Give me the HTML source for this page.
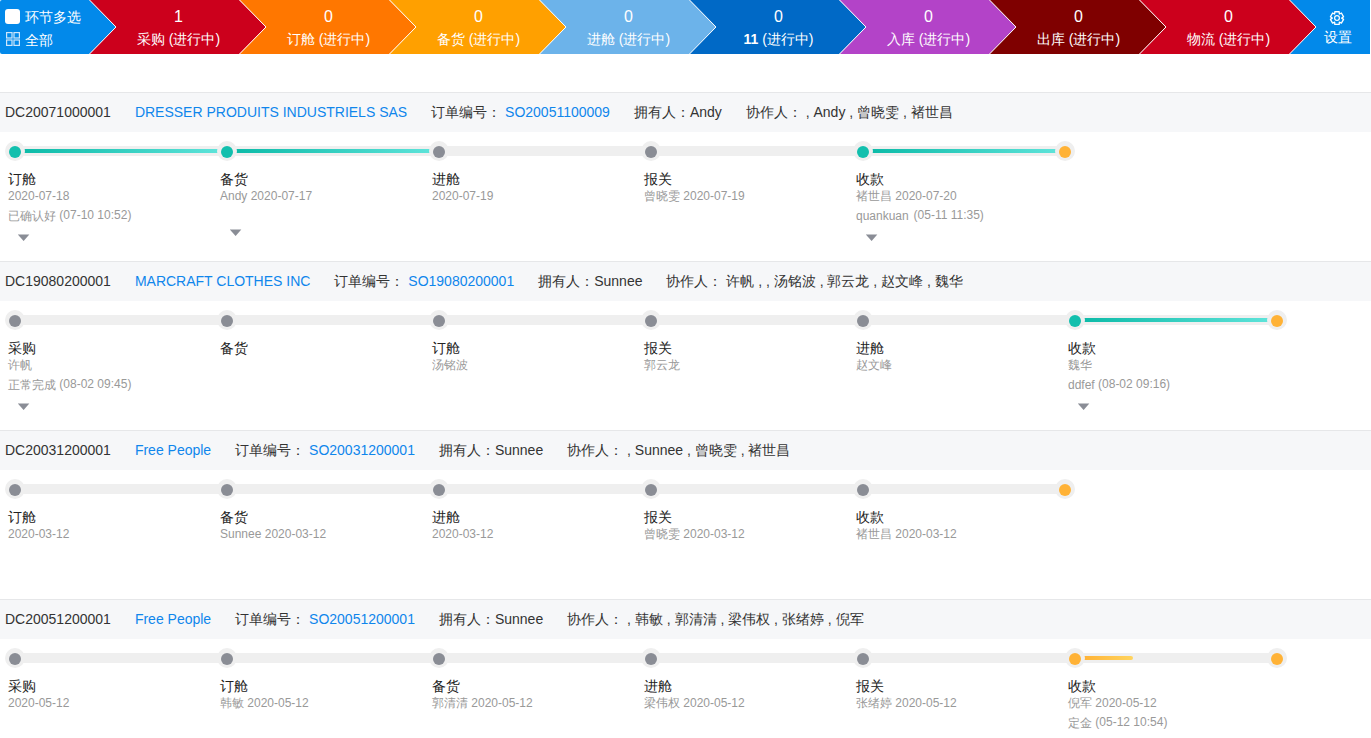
<!DOCTYPE html>
<html><head><meta charset="utf-8"><style>
*{box-sizing:border-box;margin:0;padding:0}
html,body{width:1371px;height:738px;overflow:hidden;background:#fff;font-family:"Liberation Sans",sans-serif;}
.abs{position:absolute}
.hdr{position:absolute;left:0;top:0;width:1371px;height:54px}
.seg-t{position:absolute;color:#fff;text-align:center;white-space:nowrap}
.num{font-size:16px;line-height:16px;top:9px}
.lbl{font-size:14px;line-height:14px;top:32px}
.rh{position:absolute;left:0;width:1371px;height:40px;background:#f6f7f9;border-top:1px solid #e6e7e9}
.rhf{position:absolute;left:5px;top:11px;font-size:14px;line-height:16px;color:#333;white-space:nowrap}
.rhf span{margin-right:24px}
.rhf i{font-style:normal}
.lk{color:#0f86ec}
.track{position:absolute;height:10px;background:#efefef;border-radius:5px}
.bar{position:absolute;height:4px;border-radius:2px}
.ring{position:absolute;width:20px;height:20px;border-radius:50%;background:#efefef}
.dot{position:absolute;width:12px;height:12px;border-radius:50%}
.t1{position:absolute;font-size:14px;line-height:16px;color:#222;white-space:nowrap}
.t2{position:absolute;font-size:12px;line-height:14px;color:#999;white-space:nowrap}
.caret{position:absolute}
</style></head><body>

<svg class="hdr" width="1371" height="54" viewBox="0 0 1371 54"><path d="M2,0 H89.5 L116,27 L89.5,54 H2 Q0,54 0,52 V2 Q0,0 2,0 Z" fill="#0289ea"/><path d="M1289.5,0 H1370 V54 H1289.5 L1316,27 Z" fill="#0289ea"/><path d="M89.5,0 H239.5 L266.0,27 L239.5,54 H89.5 L116.0,27 Z" fill="#cc001c"/><path d="M239.5,0 H389.5 L416.0,27 L389.5,54 H239.5 L266.0,27 Z" fill="#ff7700"/><path d="M389.5,0 H539.5 L566.0,27 L539.5,54 H389.5 L416.0,27 Z" fill="#ffa000"/><path d="M539.5,0 H689.5 L716.0,27 L689.5,54 H539.5 L566.0,27 Z" fill="#6cb3ea"/><path d="M689.5,0 H839.5 L866.0,27 L839.5,54 H689.5 L716.0,27 Z" fill="#0069c6"/><path d="M839.5,0 H989.5 L1016.0,27 L989.5,54 H839.5 L866.0,27 Z" fill="#b343c8"/><path d="M989.5,0 H1139.5 L1166.0,27 L1139.5,54 H989.5 L1016.0,27 Z" fill="#7f0000"/><path d="M1139.5,0 H1289.5 L1316.0,27 L1289.5,54 H1139.5 L1166.0,27 Z" fill="#cc001c"/><path d="M89.5,0 L116.0,27 L89.5,54" fill="none" stroke="#fff" stroke-width="1"/><path d="M239.5,0 L266.0,27 L239.5,54" fill="none" stroke="#fff" stroke-width="1"/><path d="M389.5,0 L416.0,27 L389.5,54" fill="none" stroke="#fff" stroke-width="1"/><path d="M539.5,0 L566.0,27 L539.5,54" fill="none" stroke="#fff" stroke-width="1"/><path d="M689.5,0 L716.0,27 L689.5,54" fill="none" stroke="#fff" stroke-width="1"/><path d="M839.5,0 L866.0,27 L839.5,54" fill="none" stroke="#fff" stroke-width="1"/><path d="M989.5,0 L1016.0,27 L989.5,54" fill="none" stroke="#fff" stroke-width="1"/><path d="M1139.5,0 L1166.0,27 L1139.5,54" fill="none" stroke="#fff" stroke-width="1"/><path d="M1289.5,0 L1316.0,27 L1289.5,54" fill="none" stroke="#fff" stroke-width="1"/></svg>
<div class="abs" style="left:5px;top:9px;width:15px;height:15px;background:#fff;border-radius:3px"></div>
<div class="abs" style="left:25px;top:9px;font-size:14px;line-height:16px;color:#fff">环节多选</div>
<svg class="abs" style="left:6px;top:32px" width="14" height="14" viewBox="0 0 14 14"><g fill="none" stroke="#cfe6fb" stroke-width="1.2"><rect x="0.6" y="0.6" width="5.4" height="5.4"/><rect x="8" y="0.6" width="5.4" height="5.4"/><rect x="0.6" y="8" width="5.4" height="5.4"/><rect x="8" y="8" width="5.4" height="5.4"/></g></svg>
<div class="abs" style="left:25px;top:32px;font-size:14px;line-height:16px;color:#fff">全部</div>
<div class="seg-t num" style="left:118.5px;width:120px">1</div>
<div class="seg-t lbl" style="left:108.5px;width:140px">采购 (进行中)</div>
<div class="seg-t num" style="left:268.5px;width:120px">0</div>
<div class="seg-t lbl" style="left:258.5px;width:140px">订舱 (进行中)</div>
<div class="seg-t num" style="left:418.5px;width:120px">0</div>
<div class="seg-t lbl" style="left:408.5px;width:140px">备货 (进行中)</div>
<div class="seg-t num" style="left:568.5px;width:120px">0</div>
<div class="seg-t lbl" style="left:558.5px;width:140px">进舱 (进行中)</div>
<div class="seg-t num" style="left:718.5px;width:120px">0</div>
<div class="seg-t lbl" style="left:708.5px;width:140px"><b>11</b> (进行中)</div>
<div class="seg-t num" style="left:868.5px;width:120px">0</div>
<div class="seg-t lbl" style="left:858.5px;width:140px">入库 (进行中)</div>
<div class="seg-t num" style="left:1018.5px;width:120px">0</div>
<div class="seg-t lbl" style="left:1008.5px;width:140px">出库 (进行中)</div>
<div class="seg-t num" style="left:1168.5px;width:120px">0</div>
<div class="seg-t lbl" style="left:1158.5px;width:140px">物流 (进行中)</div>
<svg class="abs" style="left:1328px;top:9px" width="18" height="18" viewBox="0 0 18 18"><path fill="none" stroke="#fff" stroke-width="1.3" stroke-linejoin="round" d="M11.18,2.77 L6.82,2.77 L6.65,5.03 L4.60,4.04 L2.42,7.82 L4.30,9.10 L2.42,10.38 L4.60,14.16 L6.65,13.17 L6.82,15.43 L11.18,15.43 L11.35,13.17 L13.40,14.16 L15.58,10.38 L13.70,9.10 L15.58,7.82 L13.40,4.04 L11.35,5.03Z"/><circle cx="9" cy="9.1" r="2.4" fill="none" stroke="#fff" stroke-width="1.2"/></svg>
<div class="abs" style="left:1310px;top:30px;width:56px;text-align:center;font-size:14px;line-height:14px;color:#fff">设置</div>
<div class="rh" style="top:92px">
<div class="rhf"><span>DC20071000001</span><span class="lk">DRESSER PRODUITS INDUSTRIELS SAS</span><span>订单编号：&nbsp;<i class="lk">SO20051100009</i></span><span>拥有人：Andy</span><span>协作人：&nbsp;, Andy , 曾晓雯 , 褚世昌</span></div>
</div>
<div class="track" style="left:10px;top:146px;width:1055px"></div>
<div class="bar" style="left:23px;top:149px;width:196px;background:linear-gradient(90deg,#0dbba8,#5de3d9)"></div>
<div class="ring" style="left:5px;top:141px"></div>
<div class="dot" style="left:9px;top:146px;background:#12bfad"></div>
<div class="t1" style="left:8px;top:171px">订舱</div>
<div class="t2" style="left:8px;top:189px">2020-07-18</div>
<div class="t2" style="left:8px;top:209px">已确认好 <span style="position:relative;top:-1.5px;margin-left:0">(07-10 10:52)</span></div>
<svg class="caret" style="left:18px;top:234px" width="12" height="8"><polygon points="-0.1,0.6 11.3,0.6 5.6,6.9" fill="#8a8d96"/></svg>
<div class="bar" style="left:235px;top:149px;width:196px;background:linear-gradient(90deg,#0dbba8,#5de3d9)"></div>
<div class="ring" style="left:217px;top:141px"></div>
<div class="dot" style="left:221px;top:146px;background:#12bfad"></div>
<div class="t1" style="left:220px;top:171px">备货</div>
<div class="t2" style="left:220px;top:189px">Andy 2020-07-17</div>
<svg class="caret" style="left:230px;top:229px" width="12" height="8"><polygon points="-0.1,0.6 11.3,0.6 5.6,6.9" fill="#8a8d96"/></svg>
<div class="ring" style="left:429px;top:141px"></div>
<div class="dot" style="left:433px;top:146px;background:#8a8d95"></div>
<div class="t1" style="left:432px;top:171px">进舱</div>
<div class="t2" style="left:432px;top:189px">2020-07-19</div>
<div class="ring" style="left:641px;top:141px"></div>
<div class="dot" style="left:645px;top:146px;background:#8a8d95"></div>
<div class="t1" style="left:644px;top:171px">报关</div>
<div class="t2" style="left:644px;top:189px">曾晓雯 2020-07-19</div>
<div class="bar" style="left:871px;top:149px;width:186px;background:linear-gradient(90deg,#0dbba8,#5de3d9)"></div>
<div class="ring" style="left:853px;top:141px"></div>
<div class="dot" style="left:857px;top:146px;background:#12bfad"></div>
<div class="t1" style="left:856px;top:171px">收款</div>
<div class="t2" style="left:856px;top:189px">褚世昌 2020-07-20</div>
<div class="t2" style="left:856px;top:209px">quankuan <span style="position:relative;top:-1.5px;margin-left:1.5px">(05-11 11:35)</span></div>
<svg class="caret" style="left:866px;top:234px" width="12" height="8"><polygon points="-0.1,0.6 11.3,0.6 5.6,6.9" fill="#8a8d96"/></svg>
<div class="ring" style="left:1055px;top:141px"></div>
<div class="dot" style="left:1059px;top:146px;background:#ffb236"></div>
<div class="rh" style="top:261px">
<div class="rhf"><span>DC19080200001</span><span class="lk">MARCRAFT CLOTHES INC</span><span>订单编号：&nbsp;<i class="lk">SO19080200001</i></span><span>拥有人：Sunnee</span><span>协作人：&nbsp;许帆 , , 汤铭波 , 郭云龙 , 赵文峰 , 魏华</span></div>
</div>
<div class="track" style="left:10px;top:315px;width:1267px"></div>
<div class="ring" style="left:5px;top:310px"></div>
<div class="dot" style="left:9px;top:315px;background:#8a8d95"></div>
<div class="t1" style="left:8px;top:340px">采购</div>
<div class="t2" style="left:8px;top:358px">许帆</div>
<div class="t2" style="left:8px;top:378px">正常完成 <span style="position:relative;top:-1.5px;margin-left:0">(08-02 09:45)</span></div>
<svg class="caret" style="left:18px;top:403px" width="12" height="8"><polygon points="-0.1,0.6 11.3,0.6 5.6,6.9" fill="#8a8d96"/></svg>
<div class="ring" style="left:217px;top:310px"></div>
<div class="dot" style="left:221px;top:315px;background:#8a8d95"></div>
<div class="t1" style="left:220px;top:340px">备货</div>
<div class="ring" style="left:429px;top:310px"></div>
<div class="dot" style="left:433px;top:315px;background:#8a8d95"></div>
<div class="t1" style="left:432px;top:340px">订舱</div>
<div class="t2" style="left:432px;top:358px">汤铭波</div>
<div class="ring" style="left:641px;top:310px"></div>
<div class="dot" style="left:645px;top:315px;background:#8a8d95"></div>
<div class="t1" style="left:644px;top:340px">报关</div>
<div class="t2" style="left:644px;top:358px">郭云龙</div>
<div class="ring" style="left:853px;top:310px"></div>
<div class="dot" style="left:857px;top:315px;background:#8a8d95"></div>
<div class="t1" style="left:856px;top:340px">进舱</div>
<div class="t2" style="left:856px;top:358px">赵文峰</div>
<div class="bar" style="left:1083px;top:318px;width:186px;background:linear-gradient(90deg,#0dbba8,#5de3d9)"></div>
<div class="ring" style="left:1065px;top:310px"></div>
<div class="dot" style="left:1069px;top:315px;background:#12bfad"></div>
<div class="t1" style="left:1068px;top:340px">收款</div>
<div class="t2" style="left:1068px;top:358px">魏华</div>
<div class="t2" style="left:1068px;top:378px">ddfef <span style="position:relative;top:-1.5px;margin-left:0">(08-02 09:16)</span></div>
<svg class="caret" style="left:1078px;top:403px" width="12" height="8"><polygon points="-0.1,0.6 11.3,0.6 5.6,6.9" fill="#8a8d96"/></svg>
<div class="ring" style="left:1267px;top:310px"></div>
<div class="dot" style="left:1271px;top:315px;background:#ffb236"></div>
<div class="rh" style="top:430px">
<div class="rhf"><span>DC20031200001</span><span class="lk">Free People</span><span>订单编号：&nbsp;<i class="lk">SO20031200001</i></span><span>拥有人：Sunnee</span><span>协作人：&nbsp;, Sunnee , 曾晓雯 , 褚世昌</span></div>
</div>
<div class="track" style="left:10px;top:484px;width:1055px"></div>
<div class="ring" style="left:5px;top:479px"></div>
<div class="dot" style="left:9px;top:484px;background:#8a8d95"></div>
<div class="t1" style="left:8px;top:509px">订舱</div>
<div class="t2" style="left:8px;top:527px">2020-03-12</div>
<div class="ring" style="left:217px;top:479px"></div>
<div class="dot" style="left:221px;top:484px;background:#8a8d95"></div>
<div class="t1" style="left:220px;top:509px">备货</div>
<div class="t2" style="left:220px;top:527px">Sunnee 2020-03-12</div>
<div class="ring" style="left:429px;top:479px"></div>
<div class="dot" style="left:433px;top:484px;background:#8a8d95"></div>
<div class="t1" style="left:432px;top:509px">进舱</div>
<div class="t2" style="left:432px;top:527px">2020-03-12</div>
<div class="ring" style="left:641px;top:479px"></div>
<div class="dot" style="left:645px;top:484px;background:#8a8d95"></div>
<div class="t1" style="left:644px;top:509px">报关</div>
<div class="t2" style="left:644px;top:527px">曾晓雯 2020-03-12</div>
<div class="ring" style="left:853px;top:479px"></div>
<div class="dot" style="left:857px;top:484px;background:#8a8d95"></div>
<div class="t1" style="left:856px;top:509px">收款</div>
<div class="t2" style="left:856px;top:527px">褚世昌 2020-03-12</div>
<div class="ring" style="left:1055px;top:479px"></div>
<div class="dot" style="left:1059px;top:484px;background:#ffb236"></div>
<div class="rh" style="top:599px">
<div class="rhf"><span>DC20051200001</span><span class="lk">Free People</span><span>订单编号：&nbsp;<i class="lk">SO20051200001</i></span><span>拥有人：Sunnee</span><span>协作人：&nbsp;, 韩敏 , 郭清清 , 梁伟权 , 张绪婷 , 倪军</span></div>
</div>
<div class="track" style="left:10px;top:653px;width:1267px"></div>
<div class="ring" style="left:5px;top:648px"></div>
<div class="dot" style="left:9px;top:653px;background:#8a8d95"></div>
<div class="t1" style="left:8px;top:678px">采购</div>
<div class="t2" style="left:8px;top:696px">2020-05-12</div>
<div class="ring" style="left:217px;top:648px"></div>
<div class="dot" style="left:221px;top:653px;background:#8a8d95"></div>
<div class="t1" style="left:220px;top:678px">订舱</div>
<div class="t2" style="left:220px;top:696px">韩敏 2020-05-12</div>
<div class="ring" style="left:429px;top:648px"></div>
<div class="dot" style="left:433px;top:653px;background:#8a8d95"></div>
<div class="t1" style="left:432px;top:678px">备货</div>
<div class="t2" style="left:432px;top:696px">郭清清 2020-05-12</div>
<div class="ring" style="left:641px;top:648px"></div>
<div class="dot" style="left:645px;top:653px;background:#8a8d95"></div>
<div class="t1" style="left:644px;top:678px">进舱</div>
<div class="t2" style="left:644px;top:696px">梁伟权 2020-05-12</div>
<div class="ring" style="left:853px;top:648px"></div>
<div class="dot" style="left:857px;top:653px;background:#8a8d95"></div>
<div class="t1" style="left:856px;top:678px">报关</div>
<div class="t2" style="left:856px;top:696px">张绪婷 2020-05-12</div>
<div class="bar" style="left:1083px;top:656px;width:50px;background:linear-gradient(90deg,#ffb236,#ffd45e)"></div>
<div class="ring" style="left:1065px;top:648px"></div>
<div class="dot" style="left:1069px;top:653px;background:#ffb236"></div>
<div class="t1" style="left:1068px;top:678px">收款</div>
<div class="t2" style="left:1068px;top:696px">倪军 2020-05-12</div>
<div class="t2" style="left:1068px;top:716px">定金 <span style="position:relative;top:-1.5px;margin-left:0">(05-12 10:54)</span></div>
<svg class="caret" style="left:1078px;top:741px" width="12" height="8"><polygon points="-0.1,0.6 11.3,0.6 5.6,6.9" fill="#8a8d96"/></svg>
<div class="ring" style="left:1267px;top:648px"></div>
<div class="dot" style="left:1271px;top:653px;background:#ffb236"></div>
</body></html>
